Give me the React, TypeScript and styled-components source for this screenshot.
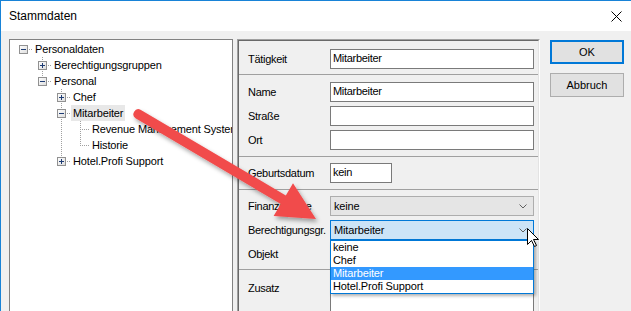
import React from 'react';
import styled, { createGlobalStyle } from 'styled-components';

const Global = createGlobalStyle`
  html, body { margin: 0; padding: 0; background: #fff; }
  body { font-family: "Liberation Sans", Arial, sans-serif; color: #000; }
  * { box-sizing: border-box; }
`;

const Page = styled.div`
  position: relative;
  width: 631px;
  height: 311px;
  overflow: hidden;
`;

const Window = styled.div`
  width: 631px;
  height: 311px;
  border-top: 1px solid #1883d7;
  border-left: 1px solid #1883d7;
  background: #f0f0f0;
  display: flex;
  flex-direction: column;
  overflow: hidden;
`;

const TitleBar = styled.div`
  flex: none;
  height: 30px;
  background: #fff;
  display: flex;
  align-items: center;
  justify-content: space-between;
  padding: 0 9px 0 8px;
`;

const Title = styled.span`
  font-size: 12px;
  line-height: 14px;
`;

const Body = styled.div`
  flex: 1;
  min-height: 0;
  display: flex;
  align-items: flex-start;
  padding: 8px 0 0 8px;
`;

const Tree = styled.div`
  flex: none;
  width: 224px;
  height: 290px;
  border: 1px solid #828282;
  background: #fff;
  padding: 1px 0 0 4px;
  overflow: hidden;
`;

const TreeRow = styled.div`
  display: flex;
  height: 16px;
  white-space: nowrap;
`;

const NodeLabel = styled.span<{ $selected?: boolean }>`
  display: inline-block;
  height: 16px;
  line-height: 16px;
  padding: 0 2px;
  font-size: 11px;
  letter-spacing: -0.15px;
  background: ${(p) => (p.$selected ? '#e8e8e8' : 'transparent')};
`;

const ConnectorSvg = styled.svg`
  flex: none;
  display: block;
`;

const Panel = styled.div`
  flex: none;
  width: 303px;
  height: 290px;
  margin-left: 4px;
  border-style: solid;
  border-width: 1px;
  border-color: #a0a0a0 #ffffff #ffffff #a0a0a0;
`;

const PanelInner = styled.div`
  height: 100%;
  border-style: solid;
  border-width: 1px;
  border-color: #696969 #e3e3e3 #e3e3e3 #696969;
  display: flex;
  flex-direction: column;
`;

const Section = styled.div<{ $pt: number; $pb: number; $last?: boolean }>`
  display: flex;
  flex-direction: column;
  gap: 4px;
  padding: ${(p) => p.$pt}px 4px ${(p) => p.$pb}px 9px;
  border-bottom: ${(p) => (p.$last ? 'none' : '1px solid #a0a0a0')};
  flex: ${(p) => (p.$last ? '1' : 'none')};
`;

const FieldRow = styled.div<{ $top?: boolean }>`
  display: grid;
  grid-template-columns: 82px 204px;
  align-items: ${(p) => (p.$top ? 'start' : 'center')};
`;

const Label = styled.span<{ $pt?: number }>`
  font-size: 11px;
  letter-spacing: -0.3px;
  line-height: 13px;
  padding-top: ${(p) => p.$pt ?? 0}px;
`;

const TextBox = styled.div<{ $w?: number; $h?: number }>`
  width: ${(p) => p.$w ?? 204}px;
  height: ${(p) => p.$h ?? 20}px;
  border: 1px solid #7a7a7a;
  background: #fff;
  padding: 2px 2px 0;
  font-size: 11px;
  letter-spacing: -0.3px;
  line-height: 13px;
`;

const ComboWrap = styled.div`
  position: relative;
  width: 204px;
  height: 20px;
`;

const Combo = styled.div<{ $active?: boolean }>`
  width: 204px;
  height: 20px;
  border: 1px solid ${(p) => (p.$active ? '#0078d7' : '#adadad')};
  background: ${(p) => (p.$active ? '#cce4f7' : '#e5e5e5')};
  display: flex;
  align-items: center;
  justify-content: space-between;
  padding: 0 6px 0 3px;
  font-size: 11px;
  letter-spacing: -0.15px;
`;

const DropList = styled.div`
  position: absolute;
  top: 20px;
  left: 0;
  width: 204px;
  height: 54px;
  border: 1px solid #0078d7;
  background: #fff;
  box-shadow: 2px 2px 3px rgba(0, 0, 0, 0.3);
  z-index: 5;
`;

const DropItem = styled.div<{ $hover?: boolean }>`
  height: 13px;
  line-height: 13px;
  padding-left: 2px;
  font-size: 11px;
  letter-spacing: -0.15px;
  background: ${(p) => (p.$hover ? '#3399ff' : 'transparent')};
  color: ${(p) => (p.$hover ? '#fff' : '#000')};
`;

const ButtonColumn = styled.div`
  flex: none;
  margin-left: 10px;
  padding-top: 1px;
  display: flex;
  flex-direction: column;
  gap: 9px;
`;

const Button = styled.button<{ $default?: boolean }>`
  width: 74px;
  height: 24px;
  margin: 0;
  padding: 0;
  background: #e1e1e1;
  border: ${(p) => (p.$default ? '2px solid #0078d7' : '1px solid #adadad')};
  font-family: "Liberation Sans", Arial, sans-serif;
  font-size: 11px;
  color: #000;
`;

const Overlay = styled.svg`
  position: absolute;
  left: 0;
  top: 0;
  pointer-events: none;
  z-index: 10;
`;

type Cell =
  | { kind: 'empty' }
  | { kind: 'pipe' }
  | { kind: 'node'; up: boolean; down: boolean; box?: 'plus' | 'minus' };

const DOT = '#a0a0a0';

function Connector({ cell }: { cell: Cell }) {
  const parts: React.ReactNode[] = [];
  if (cell.kind === 'pipe') {
    for (let y = 0; y < 16; y += 2) parts.push(<rect key={'p' + y} x={9} y={y} width={1} height={1} fill={DOT} />);
  }
  if (cell.kind === 'node') {
    if (cell.up) for (let y = 0; y <= 8; y += 2) parts.push(<rect key={'u' + y} x={9} y={y} width={1} height={1} fill={DOT} />);
    if (cell.down) for (let y = 8; y < 16; y += 2) parts.push(<rect key={'d' + y} x={9} y={y} width={1} height={1} fill={DOT} />);
    for (let x = 9; x < 19; x += 2) parts.push(<rect key={'h' + x} x={x} y={8} width={1} height={1} fill={DOT} />);
    if (cell.box) {
      parts.push(
        <g key="box">
          <defs>
            <linearGradient id="bx" x1="0" y1="0" x2="1" y2="1">
              <stop offset="0" stopColor="#ffffff" />
              <stop offset="1" stopColor="#dcdcdc" />
            </linearGradient>
          </defs>
          <rect x={5.5} y={4.5} width={8} height={8} fill="url(#bx)" stroke="#919191" />
          <rect x={7} y={8} width={5} height={1} fill="#1e3c74" />
          {cell.box === 'plus' && <rect x={9} y={6} width={1} height={5} fill="#1e3c74" />}
        </g>
      );
    }
  }
  return (
    <ConnectorSvg width={19} height={16} viewBox="0 0 19 16" shapeRendering="crispEdges">
      {parts}
    </ConnectorSvg>
  );
}

const E: Cell = { kind: 'empty' };
const P: Cell = { kind: 'pipe' };

const treeRows: { label: string; cells: Cell[]; selected?: boolean }[] = [
  { label: 'Personaldaten', cells: [{ kind: 'node', up: false, down: false, box: 'minus' }] },
  { label: 'Berechtigungsgruppen', cells: [E, { kind: 'node', up: true, down: true, box: 'plus' }] },
  { label: 'Personal', cells: [E, { kind: 'node', up: true, down: false, box: 'minus' }] },
  { label: 'Chef', cells: [E, E, { kind: 'node', up: true, down: true, box: 'plus' }] },
  { label: 'Mitarbeiter', cells: [E, E, { kind: 'node', up: true, down: true, box: 'minus' }], selected: true },
  { label: 'Revenue Management System', cells: [E, E, P, { kind: 'node', up: true, down: true }] },
  { label: 'Historie', cells: [E, E, P, { kind: 'node', up: true, down: false }] },
  { label: 'Hotel.Profi Support', cells: [E, E, { kind: 'node', up: true, down: false, box: 'plus' }] },
];

function Chevron() {
  return (
    <svg width={8} height={5} viewBox="0 0 8 5">
      <polyline points="0.5,0.5 4,4 7.5,0.5" fill="none" stroke="#606060" strokeWidth={1} />
    </svg>
  );
}

function CloseIcon() {
  return (
    <svg width={11} height={11} viewBox="0 0 11 11">
      <path d="M0.5 0.5 L10.5 10.5 M10.5 0.5 L0.5 10.5" stroke="#000" strokeWidth={1} />
    </svg>
  );
}

export default function App() {
  return (
    <Page>
      <Global />
      <Window>
        <TitleBar>
          <Title>Stammdaten</Title>
          <CloseIcon />
        </TitleBar>
        <Body>
          <Tree>
            {treeRows.map((r) => (
              <TreeRow key={r.label}>
                {r.cells.map((c, i) => (
                  <Connector key={i} cell={c} />
                ))}
                <NodeLabel $selected={r.selected}>{r.label}</NodeLabel>
              </TreeRow>
            ))}
          </Tree>
          <Panel>
            <PanelInner>
              <Section $pt={8} $pb={5}>
                <FieldRow>
                  <Label>Tätigkeit</Label>
                  <TextBox>Mitarbeiter</TextBox>
                </FieldRow>
              </Section>
              <Section $pt={7} $pb={6}>
                <FieldRow>
                  <Label>Name</Label>
                  <TextBox>Mitarbeiter</TextBox>
                </FieldRow>
                <FieldRow>
                  <Label>Straße</Label>
                  <TextBox />
                </FieldRow>
                <FieldRow>
                  <Label>Ort</Label>
                  <TextBox />
                </FieldRow>
              </Section>
              <Section $pt={6} $pb={6}>
                <FieldRow>
                  <Label>Geburtsdatum</Label>
                  <TextBox $w={62}>kein</TextBox>
                </FieldRow>
              </Section>
              <Section $pt={6} $pb={5}>
                <FieldRow>
                  <Label>Finanzgruppe</Label>
                  <Combo>
                    <span>keine</span>
                    <Chevron />
                  </Combo>
                </FieldRow>
                <FieldRow>
                  <Label>Berechtigungsgr.</Label>
                  <ComboWrap>
                    <Combo $active>
                      <span>Mitarbeiter</span>
                      <Chevron />
                    </Combo>
                    <DropList>
                      <DropItem>keine</DropItem>
                      <DropItem>Chef</DropItem>
                      <DropItem $hover>Mitarbeiter</DropItem>
                      <DropItem>Hotel.Profi Support</DropItem>
                    </DropList>
                  </ComboWrap>
                </FieldRow>
                <FieldRow>
                  <Label>Objekt</Label>
                  <Combo>
                    <span></span>
                    <Chevron />
                  </Combo>
                </FieldRow>
              </Section>
              <Section $pt={7} $pb={0} $last>
                <FieldRow $top>
                  <Label $pt={5}>Zusatz</Label>
                  <TextBox $h={60} />
                </FieldRow>
              </Section>
            </PanelInner>
          </Panel>
          <ButtonColumn>
            <Button $default>OK</Button>
            <Button>Abbruch</Button>
          </ButtonColumn>
        </Body>
      </Window>
      <Overlay width={631} height={311} viewBox="0 0 631 311">
        <defs>
          <filter id="arrowShadow" x="-20%" y="-20%" width="140%" height="140%">
            <feDropShadow dx="2" dy="3" stdDeviation="2" floodColor="#000" floodOpacity="0.35" />
          </filter>
        </defs>
        <path
          d="M140.5 109.7 L285.8 195.4 L293 183.3 L316 219 L273.6 216.1 L280.8 204 L135.5 118.3 A5 5 0 0 1 140.5 109.7 Z"
          fill="#f14b4b"
          filter="url(#arrowShadow)"
        />
        <path
          d="M527.5 228.5 L527.5 244.5 L531.5 240.5 L534.5 246.5 L536.5 245.5 L533.5 239.5 L538.5 239.5 Z"
          fill="#fff"
          stroke="#000"
          strokeWidth={1}
        />
      </Overlay>
    </Page>
  );
}
